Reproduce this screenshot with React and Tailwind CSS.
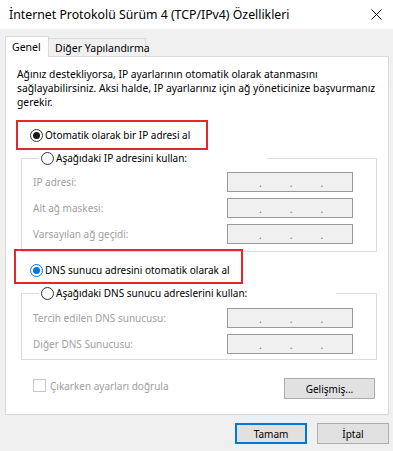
import React from 'react';

function Radio({ checked, blue }) {
  const ring = checked && blue ? 'border-[#0078d7]' : 'border-[#333333]';
  const dot = blue ? 'bg-[#0078d7]' : 'bg-[#1a1a1a]';
  return (
    <span className={`w-[13px] h-[13px] rounded-full border bg-white flex items-center justify-center shrink-0 ${ring}`}>
      {checked && <span className={`w-[7px] h-[7px] rounded-full ${dot}`} />}
    </span>
  );
}

function IpBox() {
  return (
    <div className="w-[126px] h-[20px] border border-[#9a9a9a] bg-[#f0f0f0] flex items-end pb-[1px] pl-[31px] gap-[28px] text-[#707070] leading-[14px]">
      <span>.</span>
      <span>.</span>
      <span>.</span>
    </div>
  );
}

function Row({ label }) {
  return (
    <div className="flex items-center h-[20px]">
      <span className="w-[194px] text-[#a0a0a0]">{label}</span>
      <IpBox />
    </div>
  );
}

export default function App() {
  return (
    <div className="w-[393px] h-[451px] bg-[#f0f0f0] overflow-hidden text-[10px] leading-[14px] text-black whitespace-nowrap font-['Noto_Sans',sans-serif]">
      {/* title bar */}
      <div className="h-[29px] bg-white flex items-center justify-between pl-[9px] pr-[6px]">
        <span className="text-[12.3px]">İnternet Protokolü Sürüm 4 (TCP/IPv4) Özellikleri</span>
        <svg width="11" height="11" viewBox="0 0 11 11" className="mr-[5px]">
          <path d="M0.5 0.5 L10.5 10.5 M10.5 0.5 L0.5 10.5" stroke="#111" strokeWidth="1" />
        </svg>
      </div>

      <div className="pl-[5px] pr-[4px] pt-[7px]">
        {/* tabs */}
        <div className="flex items-end h-[20px]">
          <div className="relative z-10 -mb-px w-[44px] h-[21px] pl-[6px] pt-[3px] text-[10.5px] bg-white border border-b-0 border-[#d9d9d9]">
            Genel
          </div>
          <div className="w-[97px] h-[18px] pl-[6px] pt-[2px] text-[10.5px] border border-l-0 border-b-0 border-[#d9d9d9]">
            Diğer Yapılandırma
          </div>
        </div>

        {/* panel */}
        <div className="h-[359px] bg-white border border-[#d9d9d9] pl-[11px] pr-[12px] pt-[10px]">
          <p className="w-[370px] whitespace-normal text-[10.3px]">
            Ağınız destekliyorsa, IP ayarlarının otomatik olarak atanmasını sağlayabilirsiniz. Aksi halde, IP ayarlarınız için ağ yöneticinize başvurmanız gerekir.
          </p>

          <div className="mt-[11px] -ml-px w-[192px] h-[30px] border-2 border-[#e0282e] flex items-center pl-[12px] gap-[2px]">
            <Radio checked />
            <span>Otomatik olarak bir IP adresi al</span>
          </div>

          <fieldset className="ml-[4px] w-[356px] border border-[#dcdcdc] pl-[11px] pb-[7px]">
            <legend className="ml-[6px] w-[228px] h-[16px] flex items-center pl-[2px] gap-[2px] bg-white">
              <Radio />
              <span>Aşağıdaki IP adresini kullan:</span>
            </legend>
            <div className="mt-[6px] flex flex-col gap-[6px]">
              <Row label="IP adresi:" />
              <Row label="Alt ağ maskesi:" />
              <Row label="Varsayılan ağ geçidi:" />
            </div>
          </fieldset>

          <div className="relative -mt-[3px] -ml-[3px] w-[229px] h-[35px] border-2 border-[#e0282e] flex items-center pt-[7px] pl-[14px] gap-[2px]">
            <Radio checked blue />
            <span>DNS sunucu adresini otomatik olarak al</span>
          </div>

          <fieldset className="mt-[1px] ml-[4px] w-[356px] border border-[#dcdcdc] pl-[11px] pb-[5px]">
            <legend className="ml-[6px] w-[297px] h-[16px] flex items-center pl-[2px] gap-[2px] bg-white">
              <Radio />
              <span>Aşağıdaki DNS sunucu adreslerini kullan:</span>
            </legend>
            <div className="mt-[7px] flex flex-col gap-[6px]">
              <Row label="Tercih edilen DNS sunucusu:" />
              <Row label="Diğer DNS Sunucusu:" />
            </div>
          </fieldset>

          <div className="mt-[18px] flex items-start justify-between pr-[1px]">
            <div className="flex items-center gap-[4px] pl-[16px] pt-[1px] h-[14px]">
              <span className="w-[13px] h-[13px] border border-[#c6c6c6] bg-white" />
              <span className="text-[#a0a0a0]">Çıkarken ayarları doğrula</span>
            </div>
            <button className="w-[91px] h-[21px] bg-[#e1e1e1] border border-[#adadad] text-black">
              Gelişmiş...
            </button>
          </div>
        </div>
      </div>

      {/* dialog buttons */}
      <div className="flex justify-end gap-[10px] pr-[4px] pt-[8px]">
        <button className="w-[72px] h-[21px] bg-[#e1e1e1] border-2 border-[#0078d7]">Tamam</button>
        <button className="w-[72px] h-[21px] bg-[#e1e1e1] border border-[#adadad]">İptal</button>
      </div>
    </div>
  );
}
